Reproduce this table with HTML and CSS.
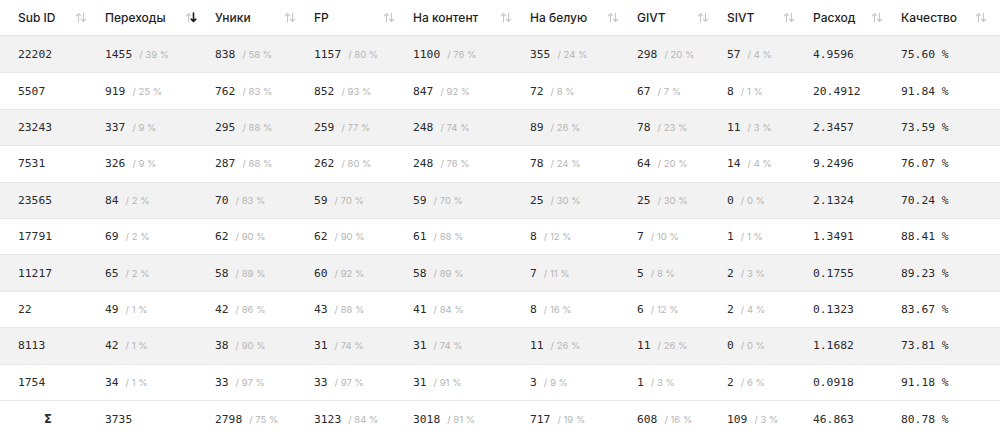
FILE: index.html
```html
<!DOCTYPE html>
<html lang="ru">
<head>
<meta charset="utf-8">
<link rel="stylesheet" href="styles.css">
</head>
<body>
<svg class="defs" width="0" height="0">
  <symbol id="s-up" viewBox="0 0 12 11"><path d="M3.5 10V1.6M1.2 3.9L3.5 1.6 5.8 3.9" fill="none" stroke-linecap="round" stroke-linejoin="round"/></symbol>
  <symbol id="s-dn" viewBox="0 0 12 11"><path d="M8.5 1V9.4M6.2 7.1L8.5 9.4 10.8 7.1" fill="none" stroke-linecap="round" stroke-linejoin="round"/></symbol>
</svg>
<table class="grid">
  <colgroup>
    <col class="c1"><col class="c2"><col class="c3"><col class="c4"><col class="c5">
    <col class="c6"><col class="c7"><col class="c8"><col class="c9"><col class="c10">
  </colgroup>
  <thead>
    <tr>
      <th><div class="hd"><span>Sub ID</span><svg class="sort"><use href="#s-up"/><use href="#s-dn"/></svg></div></th>
      <th><div class="hd"><span>Переходы</span><svg class="sort"><use href="#s-up"/><use class="on" href="#s-dn"/></svg></div></th>
      <th><div class="hd"><span>Уники</span><svg class="sort"><use href="#s-up"/><use href="#s-dn"/></svg></div></th>
      <th><div class="hd"><span>FP</span><svg class="sort"><use href="#s-up"/><use href="#s-dn"/></svg></div></th>
      <th><div class="hd"><span>На контент</span><svg class="sort"><use href="#s-up"/><use href="#s-dn"/></svg></div></th>
      <th><div class="hd"><span>На белую</span><svg class="sort"><use href="#s-up"/><use href="#s-dn"/></svg></div></th>
      <th><div class="hd"><span>GIVT</span><svg class="sort"><use href="#s-up"/><use href="#s-dn"/></svg></div></th>
      <th><div class="hd"><span>SIVT</span><svg class="sort"><use href="#s-up"/><use href="#s-dn"/></svg></div></th>
      <th><div class="hd"><span>Расход</span><svg class="sort"><use href="#s-up"/><use href="#s-dn"/></svg></div></th>
      <th><div class="hd"><span>Качество</span><svg class="sort"><use href="#s-up"/><use href="#s-dn"/></svg></div></th>
    </tr>
  </thead>
  <tbody>
    <tr class="alt">
      <td>22202</td><td>1455<i>/ 39 %</i></td><td>838<i>/ 58 %</i></td><td>1157<i>/ 80 %</i></td><td>1100<i>/ 76 %</i></td><td>355<i>/ 24 %</i></td><td>298<i>/ 20 %</i></td><td>57<i>/ 4 %</i></td><td>4.9596</td><td>75.60 %</td>
    </tr>
    <tr>
      <td>5507</td><td>919<i>/ 25 %</i></td><td>762<i>/ 83 %</i></td><td>852<i>/ 93 %</i></td><td>847<i>/ 92 %</i></td><td>72<i>/ 8 %</i></td><td>67<i>/ 7 %</i></td><td>8<i>/ 1 %</i></td><td>20.4912</td><td>91.84 %</td>
    </tr>
    <tr class="alt">
      <td>23243</td><td>337<i>/ 9 %</i></td><td>295<i>/ 88 %</i></td><td>259<i>/ 77 %</i></td><td>248<i>/ 74 %</i></td><td>89<i>/ 26 %</i></td><td>78<i>/ 23 %</i></td><td>11<i>/ 3 %</i></td><td>2.3457</td><td>73.59 %</td>
    </tr>
    <tr>
      <td>7531</td><td>326<i>/ 9 %</i></td><td>287<i>/ 88 %</i></td><td>262<i>/ 80 %</i></td><td>248<i>/ 76 %</i></td><td>78<i>/ 24 %</i></td><td>64<i>/ 20 %</i></td><td>14<i>/ 4 %</i></td><td>9.2496</td><td>76.07 %</td>
    </tr>
    <tr class="alt">
      <td>23565</td><td>84<i>/ 2 %</i></td><td>70<i>/ 83 %</i></td><td>59<i>/ 70 %</i></td><td>59<i>/ 70 %</i></td><td>25<i>/ 30 %</i></td><td>25<i>/ 30 %</i></td><td>0<i>/ 0 %</i></td><td>2.1324</td><td>70.24 %</td>
    </tr>
    <tr>
      <td>17791</td><td>69<i>/ 2 %</i></td><td>62<i>/ 90 %</i></td><td>62<i>/ 90 %</i></td><td>61<i>/ 88 %</i></td><td>8<i>/ 12 %</i></td><td>7<i>/ 10 %</i></td><td>1<i>/ 1 %</i></td><td>1.3491</td><td>88.41 %</td>
    </tr>
    <tr class="alt">
      <td>11217</td><td>65<i>/ 2 %</i></td><td>58<i>/ 89 %</i></td><td>60<i>/ 92 %</i></td><td>58<i>/ 89 %</i></td><td>7<i>/ 11 %</i></td><td>5<i>/ 8 %</i></td><td>2<i>/ 3 %</i></td><td>0.1755</td><td>89.23 %</td>
    </tr>
    <tr>
      <td>22</td><td>49<i>/ 1 %</i></td><td>42<i>/ 86 %</i></td><td>43<i>/ 88 %</i></td><td>41<i>/ 84 %</i></td><td>8<i>/ 16 %</i></td><td>6<i>/ 12 %</i></td><td>2<i>/ 4 %</i></td><td>0.1323</td><td>83.67 %</td>
    </tr>
    <tr class="alt">
      <td>8113</td><td>42<i>/ 1 %</i></td><td>38<i>/ 90 %</i></td><td>31<i>/ 74 %</i></td><td>31<i>/ 74 %</i></td><td>11<i>/ 26 %</i></td><td>11<i>/ 26 %</i></td><td>0<i>/ 0 %</i></td><td>1.1682</td><td>73.81 %</td>
    </tr>
    <tr>
      <td>1754</td><td>34<i>/ 1 %</i></td><td>33<i>/ 97 %</i></td><td>33<i>/ 97 %</i></td><td>31<i>/ 91 %</i></td><td>3<i>/ 9 %</i></td><td>1<i>/ 3 %</i></td><td>2<i>/ 6 %</i></td><td>0.0918</td><td>91.18 %</td>
    </tr>
    <tr class="total">
      <td class="sigma">Σ</td><td>3735</td><td>2798<i>/ 75 %</i></td><td>3123<i>/ 84 %</i></td><td>3018<i>/ 81 %</i></td><td>717<i>/ 19 %</i></td><td>608<i>/ 16 %</i></td><td>109<i>/ 3 %</i></td><td>46.863</td><td>80.78 %</td>
    </tr>
  </tbody>
</table>
</body>
</html>
```
FILE: styles.css
```css
html, body {
  margin: 0;
  padding: 0;
  background: #ffffff;
}
.defs {
  position: absolute;
  width: 0;
  height: 0;
  overflow: hidden;
}
.grid {
  width: 100%;
  border-collapse: collapse;
  table-layout: fixed;
  color: #222222;
}
.c1 { width: 96px; }
.c2 { width: 110px; }
.c3 { width: 99px; }
.c4 { width: 99px; }
.c5 { width: 117px; }
.c6 { width: 107px; }
.c7 { width: 90px; }
.c8 { width: 86px; }
.c9 { width: 88px; }
.c10 { width: auto; }

.grid th {
  height: 35px;
  padding: 0 9px;
  text-align: left;
  font-family: Inter, "Noto Sans", sans-serif;
  font-size: 12px;
  font-weight: 500;
  color: #1e1e1e;
  border-bottom: 1px solid #e4e4e4;
  vertical-align: middle;
}
.grid th:first-child { padding-left: 18px; }
.grid th:last-child { padding-right: 13px; }
.hd {
  display: flex;
  align-items: center;
  justify-content: space-between;
}
.sort {
  width: 12px;
  height: 11px;
  stroke: #c6c6c6;
  stroke-width: 1.1;
  flex: none;
}
.sort .on {
  stroke: #1e1e1e;
  stroke-width: 1.6;
}
.grid td {
  height: 35.4px;
  padding: 0 9px;
  font-family: "DejaVu Sans Mono", "Liberation Mono", monospace;
  font-size: 11.3px;
  color: #2a2a2a;
  border-bottom: 1px solid #e6e6e6;
  white-space: nowrap;
  vertical-align: middle;
}
.grid tbody tr:first-child td { padding-top: 1px; }
.grid td:first-child { padding-left: 18px; }
.grid tr.alt td { background: #f2f2f2; }
.grid tr.total td { border-bottom: none; height: 37px; }
.grid td.sigma {
  padding-left: 44px;
  font-family: "DejaVu Sans", sans-serif;
  font-weight: 700;
  font-size: 11.5px;
}
.grid td i {
  font-style: normal;
  font-family: Inter, "Noto Sans", sans-serif;
  font-size: 9.5px;
  color: #b4b4b4;
  margin-left: 7px;
}
```
